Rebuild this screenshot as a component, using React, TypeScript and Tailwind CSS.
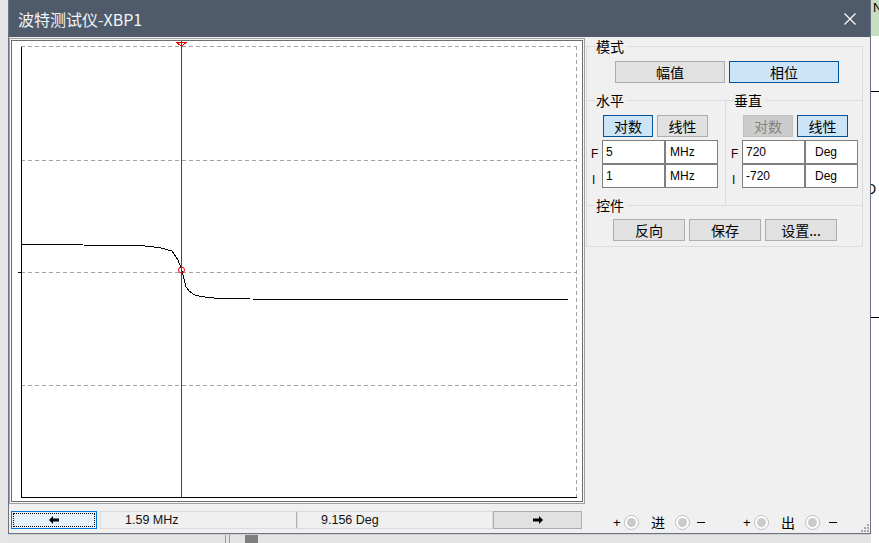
import React from 'react';

type Kind = 'n' | 'sel' | 'dis';

function Btn({ children, kind = 'n', w }: { children: React.ReactNode; kind?: Kind; w: string }) {
  const cls =
    kind === 'sel'
      ? 'bg-[#cce4f7] border-[#005499] text-black'
      : kind === 'dis'
      ? 'bg-[#cccccc] border-[#bfbfbf] text-[#838383]'
      : 'bg-[#e1e1e1] border-[#adadad] text-black';
  return (
    <div className={`${w} h-[22px] shrink-0 border ${cls} flex items-center justify-center text-[14px] leading-none`}>
      {children}
    </div>
  );
}

function Legend({ text, ml }: { text: string; ml: string }) {
  return (
    <div className="flex -mt-[9px] h-[16px]">
      <span className={`${ml} pr-[3px] bg-[#f0f0f0] text-[14px] leading-[16px] text-black`}>{text}</span>
    </div>
  );
}

function Cells({ a, b, c, d, padB }: { a: string; b: string; c: string; d: string; padB: string }) {
  return (
    <div className="grid grid-cols-[61px_51px] grid-rows-[22px_22px] gap-[2px] p-[1px] bg-[#7f7f7f] w-[116px] font-['Liberation_Sans',sans-serif] text-[12px] text-black">
      <div className="bg-white pl-[3px] flex items-center">{a}</div>
      <div className={`bg-white ${padB} flex items-center`}>{b}</div>
      <div className="bg-white pl-[3px] flex items-center">{c}</div>
      <div className={`bg-white ${padB} flex items-center`}>{d}</div>
    </div>
  );
}

function FI({ w, pl }: { w: string; pl: string }) {
  return (
    <div className={`${w} ${pl} flex flex-col font-['Liberation_Sans',sans-serif] text-[12px] text-[#2a0000]`}>
      <div className="h-[24px] flex items-center pt-[3px]">F</div>
      <div className="h-[24px] flex items-center pt-[8px] pl-[1px]">I</div>
    </div>
  );
}

function Radio() {
  return (
    <div className="w-[15px] h-[15px] shrink-0 rounded-full border border-[#bdbdbd] bg-white flex items-center justify-center">
      <div className="w-[9px] h-[9px] rounded-full bg-[#cacaca]" />
    </div>
  );
}

function ArrowL() {
  return (
    <svg width="10" height="8" viewBox="0 0 10 8">
      <polygon points="0,4 4,0 4,2.5 10,2.5 10,5.5 4,5.5 4,8" fill="#000" />
    </svg>
  );
}

function ArrowR() {
  return (
    <svg width="10" height="8" viewBox="0 0 10 8">
      <polygon points="10,4 6,0 6,2.5 0,2.5 0,5.5 6,5.5 6,8" fill="#000" />
    </svg>
  );
}

function Plot() {
  const curve =
    '9,203 70,203 71,204 133,205 148,206.7 160,210 166,219 169,227 171,234 174,245.7 177,250 182,253.7 188,255.3 197,256.7 212,257.7 238,258 556,259';
  return (
    <svg width={570} height={460} className="block" shapeRendering="crispEdges">
      <g stroke="#a3a3a3" strokeDasharray="4 3" strokeWidth={1}>
        <line x1={9} y1={5.5} x2={564} y2={5.5} />
        <line x1={9} y1={119.5} x2={564} y2={119.5} />
        <line x1={9} y1={231.5} x2={564} y2={231.5} />
        <line x1={9} y1={344.5} x2={564} y2={344.5} />
        <line x1={564.5} y1={5} x2={564.5} y2={456} />
      </g>
      <line x1={9.5} y1={6} x2={9.5} y2={457} stroke="#000" />
      <line x1={9} y1={456.5} x2={565} y2={456.5} stroke="#000" />
      <line x1={6} y1={231.5} x2={9} y2={231.5} stroke="#000" />
      <polyline points={curve} fill="none" stroke="#000" strokeWidth={1} />
      <line x1={169.5} y1={0} x2={169.5} y2={456} stroke="#e60000" />
      <path d="M165 1.5 H174 L169.5 5.5 Z" fill="none" stroke="#e60000" />
      <circle cx={169.5} cy={229} r={3} fill="none" stroke="#e60000" shapeRendering="auto" />
    </svg>
  );
}

export default function App() {
  return (
    <div className="w-[879px] h-[543px] overflow-hidden flex bg-[#e8e8e8] font-['Noto_Sans_CJK_SC',sans-serif]">
      <div className="w-[8px] shrink-0 bg-[#e6e6e6]" />
      <div className="w-[863px] shrink-0 flex flex-col">
        <div className="relative h-[534px] shrink-0 flex flex-col border-l border-r border-b border-[#6b7480] bg-[#f0f0f0]">
          {/* Title bar */}
          <div className="h-[37px] shrink-0 bg-[#4f5b6b] flex items-center justify-between pl-[9px] pr-[14px]">
            <span className="text-[16px] leading-[20px] text-[#f2f4f6]">波特测试仪-XBP1</span>
            <svg width="12" height="12" viewBox="0 0 12 12">
              <path d="M0.5 0.5 L11.5 11.5 M11.5 0.5 L0.5 11.5" stroke="#ffffff" strokeWidth="1.2" />
            </svg>
          </div>
          {/* Body */}
          <div className="flex flex-1">
            {/* Left column */}
            <div className="w-[576px] shrink-0 flex flex-col">
              <div className="mt-[1px] h-[466px] border border-[#a0a0a0]">
                <div className="h-full border border-[#f6f6f6]">
                  <div className="h-full border border-[#6d6d6d] bg-white">
                    <Plot />
                  </div>
                </div>
              </div>
              <div className="mt-[7px] h-[18px] flex font-['Liberation_Sans',sans-serif] text-[12.5px] text-[#111]">
                <div className="ml-[2px] w-[86px] h-full shrink-0 border border-[#0078d7] bg-[#e5f1fb] p-[1px]">
                  <div className="h-full border border-dotted border-black flex items-center justify-center">
                    <ArrowL />
                  </div>
                </div>
                <div className="ml-[3px] w-[197px] h-full shrink-0 border border-[#dcdcdc] border-r-[#b4b4b4] flex items-center pl-[24px]">
                  1.59 MHz
                </div>
                <div className="w-[196px] h-full shrink-0 border border-[#dcdcdc] flex items-center pl-[23px]">
                  9.156 Deg
                </div>
                <div className="w-[89px] h-full shrink-0 border border-[#adadad] bg-[#e1e1e1] flex items-center justify-center">
                  <ArrowR />
                </div>
              </div>
            </div>
            {/* Right column */}
            <div className="ml-[1px] w-[277px] shrink-0 flex flex-col">
              <div className="mt-[9px] border border-[#dcdcdc] flex flex-col">
                {/* 模式 */}
                <div className="h-[53px] flex flex-col">
                  <Legend text="模式" ml="ml-[9px]" />
                  <div className="mt-[7px] flex gap-[4px] pl-[28px]">
                    <Btn w="w-[110px]">幅值</Btn>
                    <Btn w="w-[110px]" kind="sel">相位</Btn>
                  </div>
                </div>
                {/* 水平 / 垂直 */}
                <div className="h-[105px] border-t border-[#dcdcdc] flex">
                  <div className="w-[139px] shrink-0 border-r border-[#dcdcdc] flex flex-col">
                    <Legend text="水平" ml="ml-[9px]" />
                    <div className="mt-[7px] flex gap-[4px] pl-[16px]">
                      <Btn w="w-[50px]" kind="sel">对数</Btn>
                      <Btn w="w-[51px]">线性</Btn>
                    </div>
                    <div className="mt-[3px] flex">
                      <FI w="w-[15px]" pl="pl-[4px]" />
                      <Cells a="5" b="MHz" c="1" d="MHz" padB="pl-[4px]" />
                    </div>
                  </div>
                  <div className="flex-1 flex flex-col">
                    <Legend text="垂直" ml="ml-[8px]" />
                    <div className="mt-[7px] flex gap-[4px] pl-[17px]">
                      <Btn w="w-[50px]" kind="dis">对数</Btn>
                      <Btn w="w-[51px]" kind="sel">线性</Btn>
                    </div>
                    <div className="mt-[3px] flex">
                      <FI w="w-[16px]" pl="pl-[5px]" />
                      <Cells a="720" b="Deg" c="-720" d="Deg" padB="pl-[9px]" />
                    </div>
                  </div>
                </div>
                {/* 控件 */}
                <div className="h-[41px] border-t border-[#dcdcdc] flex flex-col">
                  <Legend text="控件" ml="ml-[9px]" />
                  <div className="mt-[6px] flex gap-[4px] pl-[26px]">
                    <Btn w="w-[72px]">反向</Btn>
                    <Btn w="w-[72px]">保存</Btn>
                    <Btn w="w-[72px]">设置...</Btn>
                  </div>
                </div>
              </div>
              {/* Terminals */}
              <div className="mt-auto mb-[3px] h-[16px] flex items-center text-black">
                <span className="ml-[27px] w-[11px] shrink-0 font-['Liberation_Sans',sans-serif] text-[13px] leading-none">+</span>
                <Radio />
                <span className="ml-[12px] w-[14px] shrink-0 text-[14px] leading-none">进</span>
                <div className="ml-[10px]"><Radio /></div>
                <span className="ml-[7px] w-[8px] h-[1px] bg-black shrink-0" />
                <span className="ml-[38px] w-[11px] shrink-0 font-['Liberation_Sans',sans-serif] text-[13px] leading-none">+</span>
                <Radio />
                <span className="ml-[12px] w-[14px] shrink-0 text-[14px] leading-none">出</span>
                <div className="ml-[10px]"><Radio /></div>
                <span className="ml-[9px] w-[8px] h-[1px] bg-black shrink-0" />
              </div>
            </div>
          </div>
          {/* resize grip */}
          <svg className="absolute right-[1px] bottom-[1px]" width="10" height="10" viewBox="0 0 10 10">
            <g fill="#a8a8a8">
              <rect x="8" y="2" width="2" height="2" />
              <rect x="5" y="5" width="2" height="2" />
              <rect x="8" y="5" width="2" height="2" />
              <rect x="2" y="8" width="2" height="2" />
              <rect x="5" y="8" width="2" height="2" />
              <rect x="8" y="8" width="2" height="2" />
            </g>
          </svg>
        </div>
        {/* below window */}
        <div className="flex-1 flex bg-[#e4e4e4] border-t border-[#cfcfcf]">
          <div className="w-[217px] shrink-0" />
          <div className="w-px bg-[#9a9a9a]" />
          <div className="w-[3px]" />
          <div className="w-px bg-[#9a9a9a]" />
          <div className="w-[15px]" />
          <div className="w-[13px] bg-[#7e7e7e]" />
        </div>
      </div>
      {/* right strip outside window */}
      <div className="w-[8px] shrink-0 flex flex-col bg-white overflow-hidden">
        <div className="h-[36px] shrink-0 bg-[#c7dfc1] overflow-hidden">
          <span className="block ml-[2px] text-[13px] leading-[16px] text-black font-['Liberation_Sans',sans-serif]">N</span>
        </div>
        <div className="h-[55px] shrink-0" />
        <div className="h-px shrink-0 bg-black" />
        <div className="h-[91px] shrink-0" />
        <div className="h-[12px] shrink-0 overflow-hidden">
          <span className="block -ml-[5px] text-[14px] leading-[12px] text-black font-['Liberation_Sans',sans-serif]">D</span>
        </div>
        <div className="h-[122px] shrink-0" />
        <div className="h-px shrink-0 bg-black" />
      </div>
    </div>
  );
}
